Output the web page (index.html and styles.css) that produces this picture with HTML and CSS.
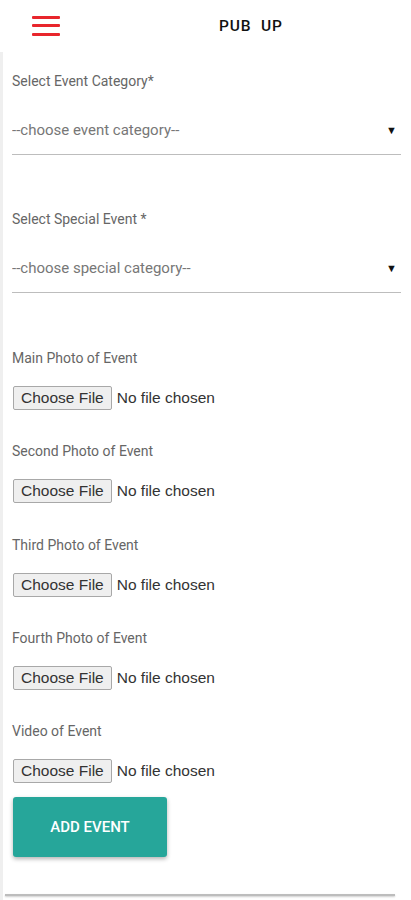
FILE: index.html
```html
<!DOCTYPE html>
<html lang="en">
<head>
<meta charset="utf-8">
<title>PUB UP</title>
<link rel="stylesheet" href="styles.css">
</head>
<body>
<header class="topbar">
  <button class="menu" aria-label="menu">
    <span class="bar"></span><span class="bar"></span><span class="bar"></span>
  </button>
  <div class="brand">PUB&nbsp;&nbsp;UP</div>
</header>
<main class="form">
  <div class="field">
    <label class="label">Select Event Category*</label>
    <div class="select">
      <select class="select-input">
        <option>--choose event category--</option>
      </select>
      <span class="arrow">&#9660;</span>
    </div>
  </div>
  <div class="field field-gap">
    <label class="label">Select Special Event *</label>
    <div class="select">
      <select class="select-input">
        <option>--choose special category--</option>
      </select>
      <span class="arrow">&#9660;</span>
    </div>
  </div>
  <div class="files">
    <div class="file-field">
      <label class="label">Main Photo of Event</label>
      <input class="file" type="file">
    </div>
    <div class="file-field">
      <label class="label">Second Photo of Event</label>
      <input class="file" type="file">
    </div>
    <div class="file-field">
      <label class="label">Third Photo of Event</label>
      <input class="file" type="file">
    </div>
    <div class="file-field">
      <label class="label">Fourth Photo of Event</label>
      <input class="file" type="file">
    </div>
    <div class="file-field">
      <label class="label">Video of Event</label>
      <input class="file" type="file">
    </div>
  </div>
  <button class="submit">ADD EVENT</button>
  <hr class="rule">
</main>
</body>
</html>
```
FILE: styles.css
```css
html, body {
  margin: 0;
  padding: 0;
  background: #fff;
  font-family: Roboto, "Liberation Sans", sans-serif;
}
.topbar {
  height: 52px;
  display: flex;
  align-items: center;
  padding-left: 32px;
}
.menu {
  width: 28px;
  height: 20px;
  padding: 0;
  border: 0;
  background: none;
  display: flex;
  flex-direction: column;
  justify-content: space-between;
  margin-top: -1px;
}
.bar {
  display: block;
  height: 3px;
  background: #e8262c;
  border-radius: 1px;
}
.brand {
  margin-left: 159px;
  font-family: Roboto, sans-serif;
  font-weight: 500;
  font-size: 15.5px;
  color: #111;
  letter-spacing: 0.9px;
}
.form {
  border-left: 3px solid #efefef;
  padding: 19px 10px 0 9px;
  min-height: 900px;
}
.field {
  display: flex;
  flex-direction: column;
  gap: 19px;
}
.field-gap {
  margin-top: 54px;
}
.label {
  font-size: 14px;
  line-height: 20px;
  color: #666;
}
.select {
  display: flex;
  align-items: center;
  height: 44px;
  border-bottom: 1.5px solid #bdbdbd;
}
.select-input {
  flex: 1;
  appearance: none;
  -webkit-appearance: none;
  border: 0;
  background: none;
  padding: 0;
  margin: 0;
  font-family: Roboto, sans-serif;
  font-size: 15px;
  color: #777;
  margin-top: -4px;
  outline: none;
}
.arrow {
  font-size: 11px;
  color: #111;
  margin-right: 4px;
  margin-top: -4px;
}
.files {
  margin-top: 55px;
  display: flex;
  flex-direction: column;
  gap: 31.25px;
}
.file-field {
  display: flex;
  flex-direction: column;
  gap: 18px;
}
.file {
  font-family: "Liberation Sans", Arial, sans-serif;
  font-size: 15.5px;
  color: #333;
  height: 24px;
  margin-left: 1px;
}
.file::file-selector-button {
  font-family: "Liberation Sans", Arial, sans-serif;
  font-size: 15.5px;
  color: #333;
  background: #efefef;
  border: 1px solid #a8a8a8;
  border-radius: 2px;
  padding: 1px 7px;
  margin-right: 5px;
  height: 24px;
}
.submit {
  display: block;
  margin-top: 14px;
  margin-left: 1px;
  width: 154px;
  height: 60px;
  border: 0;
  border-radius: 3px;
  background: #26a69a;
  color: #fff;
  font-family: Roboto, sans-serif;
  font-weight: 500;
  font-size: 15px;
  box-shadow: 0 2px 4px rgba(0,0,0,0.3);
}
.rule {
  margin: 37px 0 0 -7px;
  width: 390px;
  border: 0;
  height: 2px;
  background: #bdbdbd;
  box-shadow: 0 1px 2px rgba(0,0,0,0.2);
}
```
